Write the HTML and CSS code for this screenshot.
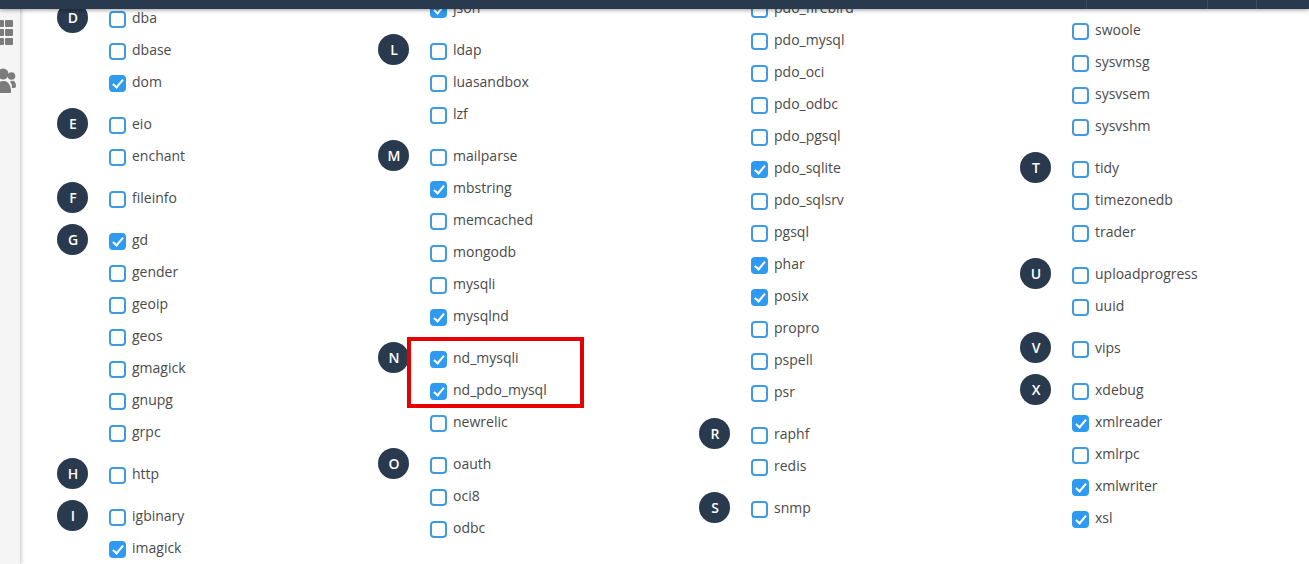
FILE: index.html
```html
<!DOCTYPE html>
<html lang="en">
<head>
  <meta charset="UTF-8">
  <meta name="viewport" content="width=device-width, initial-scale=1.0">
  <title>PHP Extensions</title>
  <link rel="stylesheet" href="styles.css">
</head>
<body>
  <div class="topbar">
    <span class="topbar-item"></span>
    <span class="topbar-item"></span>
    <span class="topbar-item"></span>
  </div>
  <div class="sidebar">
    <svg class="side-icon" width="20" height="26" viewBox="0 0 20 26">
      <rect x="-4" y="0" width="8" height="7" rx="1"/><rect x="5" y="0" width="8" height="7" rx="1"/>
      <rect x="-4" y="9" width="8" height="7" rx="1"/><rect x="5" y="9" width="8" height="7" rx="1"/>
      <rect x="-4" y="18" width="8" height="7" rx="1"/><rect x="5" y="18" width="8" height="7" rx="1"/>
    </svg>
    <svg class="side-icon" width="20" height="26" viewBox="0 0 20 26">
      <circle cx="3" cy="6" r="5.5"/><circle cx="11.5" cy="8" r="3.8"/>
      <path d="M-4 25c0-8 2-12 7-12 4 0 6 2 7 5 1 2 1 4 1 6 0 .6-.5 1-1 1z"/><path d="M11 13c3-1 5 1 5 5 0 1-.5 2-2 2h-2c0-3-.5-5-2-6z"/>
    </svg>
  </div>
  <div class="columns">
    <div class="column col-a">
      <div class="group"><div class="letter">D</div><div class="items">
        <label class="item"><input type="checkbox">dba</label>
        <label class="item"><input type="checkbox">dbase</label>
        <label class="item"><input type="checkbox" checked>dom</label>
      </div></div>
      <div class="group"><div class="letter">E</div><div class="items">
        <label class="item"><input type="checkbox">eio</label>
        <label class="item"><input type="checkbox">enchant</label>
      </div></div>
      <div class="group"><div class="letter">F</div><div class="items">
        <label class="item"><input type="checkbox">fileinfo</label>
      </div></div>
      <div class="group"><div class="letter">G</div><div class="items">
        <label class="item"><input type="checkbox" checked>gd</label>
        <label class="item"><input type="checkbox">gender</label>
        <label class="item"><input type="checkbox">geoip</label>
        <label class="item"><input type="checkbox">geos</label>
        <label class="item"><input type="checkbox">gmagick</label>
        <label class="item"><input type="checkbox">gnupg</label>
        <label class="item"><input type="checkbox">grpc</label>
      </div></div>
      <div class="group"><div class="letter">H</div><div class="items">
        <label class="item"><input type="checkbox">http</label>
      </div></div>
      <div class="group"><div class="letter">I</div><div class="items">
        <label class="item"><input type="checkbox">igbinary</label>
        <label class="item"><input type="checkbox" checked>imagick</label>
      </div></div>
    </div>
    <div class="column col-b">
      <div class="group"><div class="items">
        <label class="item"><input type="checkbox" checked>json</label>
      </div></div>
      <div class="group"><div class="letter">L</div><div class="items">
        <label class="item"><input type="checkbox">ldap</label>
        <label class="item"><input type="checkbox">luasandbox</label>
        <label class="item"><input type="checkbox">lzf</label>
      </div></div>
      <div class="group"><div class="letter">M</div><div class="items">
        <label class="item"><input type="checkbox">mailparse</label>
        <label class="item"><input type="checkbox" checked>mbstring</label>
        <label class="item"><input type="checkbox">memcached</label>
        <label class="item"><input type="checkbox">mongodb</label>
        <label class="item"><input type="checkbox">mysqli</label>
        <label class="item"><input type="checkbox" checked>mysqlnd</label>
      </div></div>
      <div class="group"><div class="letter">N</div><div class="items">
        <div class="highlight"></div>
        <label class="item"><input type="checkbox" checked>nd_mysqli</label>
        <label class="item"><input type="checkbox" checked>nd_pdo_mysql</label>
        <label class="item"><input type="checkbox">newrelic</label>
      </div></div>
      <div class="group"><div class="letter">O</div><div class="items">
        <label class="item"><input type="checkbox">oauth</label>
        <label class="item"><input type="checkbox">oci8</label>
        <label class="item"><input type="checkbox">odbc</label>
      </div></div>
    </div>
    <div class="column col-c">
      <div class="group"><div class="items">
        <label class="item"><input type="checkbox">pdo_firebird</label>
        <label class="item"><input type="checkbox">pdo_mysql</label>
        <label class="item"><input type="checkbox">pdo_oci</label>
        <label class="item"><input type="checkbox">pdo_odbc</label>
        <label class="item"><input type="checkbox">pdo_pgsql</label>
        <label class="item"><input type="checkbox" checked>pdo_sqlite</label>
        <label class="item"><input type="checkbox">pdo_sqlsrv</label>
        <label class="item"><input type="checkbox">pgsql</label>
        <label class="item"><input type="checkbox" checked>phar</label>
        <label class="item"><input type="checkbox" checked>posix</label>
        <label class="item"><input type="checkbox">propro</label>
        <label class="item"><input type="checkbox">pspell</label>
        <label class="item"><input type="checkbox">psr</label>
      </div></div>
      <div class="group"><div class="letter">R</div><div class="items">
        <label class="item"><input type="checkbox">raphf</label>
        <label class="item"><input type="checkbox">redis</label>
      </div></div>
      <div class="group"><div class="letter">S</div><div class="items">
        <label class="item"><input type="checkbox">snmp</label>
      </div></div>
    </div>
    <div class="column col-d">
      <div class="group"><div class="items">
        <label class="item"><input type="checkbox">swoole</label>
        <label class="item"><input type="checkbox">sysvmsg</label>
        <label class="item"><input type="checkbox">sysvsem</label>
        <label class="item"><input type="checkbox">sysvshm</label>
      </div></div>
      <div class="group"><div class="letter">T</div><div class="items">
        <label class="item"><input type="checkbox">tidy</label>
        <label class="item"><input type="checkbox">timezonedb</label>
        <label class="item"><input type="checkbox">trader</label>
      </div></div>
      <div class="group"><div class="letter">U</div><div class="items">
        <label class="item"><input type="checkbox">uploadprogress</label>
        <label class="item"><input type="checkbox">uuid</label>
      </div></div>
      <div class="group"><div class="letter">V</div><div class="items">
        <label class="item"><input type="checkbox">vips</label>
      </div></div>
      <div class="group"><div class="letter">X</div><div class="items">
        <label class="item"><input type="checkbox">xdebug</label>
        <label class="item"><input type="checkbox" checked>xmlreader</label>
        <label class="item"><input type="checkbox">xmlrpc</label>
        <label class="item"><input type="checkbox" checked>xmlwriter</label>
        <label class="item"><input type="checkbox" checked>xsl</label>
      </div></div>
    </div>
  </div>
</body>
</html>
```

FILE: styles.css
```css
html, body {
    height: 100%;
    overflow: hidden;
}
body {
    margin: 0;
    background: #fff;
    font-family: "Open Sans", sans-serif;
    font-size: 14px;
    color: #4a4a4a;
    display: flex;
}
.topbar {
    position: fixed;
    top: 0;
    left: 0;
    right: 0;
    height: 9px;
    background: #293a4e;
    box-shadow: 0 1px 4px rgba(0, 0, 0, 0.4);
    display: flex;
    justify-content: flex-end;
    z-index: 3;
}
.topbar-item {
    border-left: 1px solid #3b4c60;
    width: 48px;
}
.topbar-item:first-child {
    width: 120px;
}
.topbar-item:last-child {
    width: 52px;
}
.sidebar {
    width: 20px;
    flex-shrink: 0;
    background: #f5f5f5;
    box-shadow: 1px 0 4px rgba(0, 0, 0, 0.25);
    padding-top: 20px;
    display: flex;
    flex-direction: column;
    gap: 22px;
    box-sizing: border-box;
}
.side-icon {
    fill: #7b7b7b;
    display: block;
}
.columns {
    display: grid;
    grid-template-columns: repeat(4, 321px);
    align-items: start;
    padding-left: 37px;
}
.col-a { margin-top: 2px; }
.col-b { margin-top: -8px; }
.col-c { margin-top: -8px; }
.col-d { margin-top: 14px; }
.group {
    position: relative;
    padding-left: 52px;
    margin-bottom: 10px;
}
.letter {
    position: absolute;
    left: 0;
    top: 0;
    width: 31px;
    height: 31px;
    padding-left: 1px;
    box-sizing: border-box;
    border-radius: 50%;
    background: #293a4e;
    color: #fff;
    font-weight: 600;
    display: flex;
    align-items: center;
    justify-content: center;
}
.items {
    position: relative;
}
.item {
    display: flex;
    align-items: flex-start;
    height: 32px;
    line-height: 31px;
    white-space: nowrap;
}
.item input {
    appearance: none;
    position: relative;
    width: 17px;
    height: 17px;
    margin: 9px 6px 0 0;
    border: 2px solid #3f9ae2;
    border-radius: 4px;
    box-sizing: border-box;
    background: #fff;
}
.item input:checked {
    background: #2f9bf0;
    border-color: #2f9bf0;
}
.item input:checked::after {
    content: "";
    position: absolute;
    left: 4px;
    top: 0;
    width: 4px;
    height: 9px;
    border: solid #fff;
    border-width: 0 2px 2px 0;
    transform: rotate(40deg);
}
.highlight {
    position: absolute;
    left: -23px;
    top: -5px;
    width: 177px;
    height: 71px;
    border: 4px solid #e60000;
    box-sizing: border-box;
}
```
